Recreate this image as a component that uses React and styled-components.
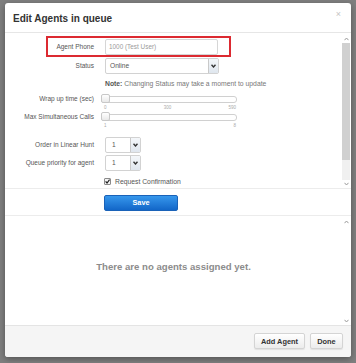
import React from 'react';
import styled, { createGlobalStyle } from 'styled-components';

const GlobalStyle = createGlobalStyle`
  html, body {
    margin: 0;
    padding: 0;
    background: #7f7f7f;
    font-family: "Liberation Sans", Arial, sans-serif;
  }
  #root {
    width: 356px;
    height: 363px;
    overflow: hidden;
  }
`;

const Page = styled.div`
  width: 356px;
  height: 363px;
  padding: 3px 0 0 5px;
  box-sizing: border-box;
  background: #7f7f7f;
`;

const Modal = styled.div`
  width: 346px;
  height: 354px;
  background: #ffffff;
  border-radius: 3px;
  box-shadow: 0 2px 6px rgba(0, 0, 0, 0.35);
  display: flex;
  flex-direction: column;
  overflow: hidden;
`;

const Header = styled.div`
  height: 29px;
  flex: none;
  display: flex;
  align-items: center;
  justify-content: space-between;
  padding: 0 8px;
  border-bottom: 1px solid #e6e6e6;
`;

const Title = styled.h3`
  margin: 1px 0 0;
  font-size: 10px;
  font-weight: bold;
  color: #333;
`;

const Close = styled.span`
  font-size: 9px;
  color: #c4c4c4;
  margin-top: -8px;
  margin-right: 2px;
`;

const FormPane = styled.div`
  height: 155px;
  flex: none;
  display: flex;
  border-bottom: 1px solid #ececec;
`;

const FormContent = styled.div`
  position: relative;
  flex: 1;
  padding-top: 5px;
  display: flex;
  flex-direction: column;
  overflow: hidden;
`;

const Highlight = styled.div`
  position: absolute;
  left: 41px;
  top: 3px;
  width: 185px;
  height: 21px;
  box-sizing: border-box;
  border: 2px solid #dc2a31;
`;

const Row = styled.div`
  display: flex;
  align-items: ${(p) => (p.$top ? 'flex-start' : 'center')};
  height: ${(p) => p.$h}px;
  margin-top: ${(p) => p.$mt || 0}px;
  flex: none;
`;

const Label = styled.div`
  width: 89px;
  text-align: right;
  font-size: 6.5px;
  line-height: 10px;
  color: #555;
  margin-right: 11px;
  white-space: nowrap;
`;

const TextInput = styled.div`
  width: 113px;
  height: 16px;
  box-sizing: border-box;
  border: 1px solid #d6d6d6;
  border-radius: 2px;
  padding-left: 3px;
  display: flex;
  align-items: center;
  font-size: 6.4px;
  color: #9a9a9a;
`;

const Select = styled.div`
  width: ${(p) => p.$w}px;
  height: 16px;
  box-sizing: border-box;
  border: 1px solid #d2d2d2;
  border-radius: 2px;
  display: flex;
  align-items: center;
  font-size: 6.6px;
  color: #555;
  overflow: hidden;
`;

const SelectValue = styled.span`
  flex: 1;
  padding-left: ${(p) => p.$pl || 4}px;
`;

const SelectArrow = styled.span`
  width: 9px;
  height: 100%;
  display: flex;
  align-items: center;
  justify-content: center;
  border-left: 1px solid #c9c9c9;
  background: linear-gradient(#f4f7fa, #dfe6ee);
`;

const Note = styled.div`
  font-size: 6.8px;
  color: #777;
  margin-left: 100px;
  b {
    color: #555;
  }
`;

const SliderBox = styled.div`
  width: 136px;
  display: flex;
  flex-direction: column;
  margin-left: -4px;
`;

const Track = styled.div`
  position: relative;
  height: 10px;
  display: flex;
  align-items: center;
`;

const TrackBar = styled.div`
  flex: 1;
  height: 5px;
  border: 1px solid #d0d0d0;
  border-radius: 3px;
  background: #fff;
`;

const Handle = styled.div`
  position: absolute;
  left: 0;
  top: 0;
  width: 9px;
  height: 9px;
  box-sizing: border-box;
  border: 1px solid #c8c8c8;
  border-radius: 2px;
  background: linear-gradient(#ffffff, #e9e9e9);
`;

const Ticks = styled.div`
  display: flex;
  justify-content: space-between;
  font-size: 4.5px;
  line-height: 7px;
  color: #aaa;
  padding: 0 1px 0 3px;
`;

const CheckRow = styled.label`
  display: flex;
  align-items: center;
  margin-left: 99px;
  font-size: 6.8px;
  color: #555;
  gap: 4px;
`;

const CheckBox = styled.span`
  width: 7px;
  height: 7px;
  box-sizing: border-box;
  border: 1px solid #8a8a8a;
  border-radius: 1px;
  display: flex;
  align-items: center;
  justify-content: center;
  background: #f4f4f4;
`;

const ScrollBar = styled.div`
  width: 8px;
  margin: 2px 1px 0 0;
  display: flex;
  flex-direction: column;
  background: ${(p) => (p.$track ? '#f0f0f0' : 'transparent')};
`;

const ScrollArrow = styled.div`
  height: 8px;
  flex: none;
  display: flex;
  align-items: center;
  justify-content: center;
  background: #fff;
`;

const ScrollThumb = styled.div`
  height: 117px;
  flex: none;
  background: #d0d0d0;
`;

const ScrollSpace = styled.div`
  flex: 1;
`;

const SavePane = styled.div`
  height: 26px;
  flex: none;
  display: flex;
  align-items: center;
  padding-left: 99px;
  border-bottom: 1px solid #ececec;
`;

const SaveButton = styled.button`
  width: 74px;
  height: 16px;
  border: 1px solid #1a62b8;
  border-radius: 2px;
  background: linear-gradient(#3797ec, #1266c8);
  color: #fff;
  font-family: inherit;
  font-weight: bold;
  font-size: 7.3px;
  padding: 0;
  margin-top: 1px;
`;

const ListPane = styled.div`
  height: 109px;
  flex: none;
  display: flex;
`;

const Empty = styled.div`
  flex: 1;
  display: flex;
  align-items: center;
  justify-content: center;
  padding-bottom: 8px;
  font-size: 9.6px;
  font-weight: bold;
  color: #8c8c8c;
`;

const Footer = styled.div`
  flex: 1;
  background: #f5f5f5;
  border-top: 1px solid #e4e4e4;
  display: flex;
  justify-content: flex-end;
  align-items: flex-start;
  gap: 5px;
  padding: 7px 8px 0 0;
`;

const FooterButton = styled.button`
  width: ${(p) => p.$w}px;
  height: 16px;
  padding: 0;
  border: 1px solid #d4d4d4;
  border-radius: 2px;
  background: linear-gradient(#ffffff, #ececec);
  box-shadow: 0 1px 1px rgba(0, 0, 0, 0.08);
  font-family: inherit;
  font-weight: bold;
  font-size: 7.4px;
  color: #333;
`;

const Chevron = ({ up, color = '#9a9a9a', w = 5, sw = 1 }) => (
  <svg width={w} height="4" viewBox="0 0 5 4">
    <polyline
      points={up ? '0.5,3.2 2.5,1 4.5,3.2' : '0.5,0.8 2.5,3 4.5,0.8'}
      fill="none"
      stroke={color}
      strokeWidth={sw}
    />
  </svg>
);

const Dropdown = ({ width, value }) => (
  <Select $w={width}>
    <SelectValue $pl={width < 50 ? 6 : 4}>{value}</SelectValue>
    <SelectArrow>
      <Chevron color="#333" sw={1.4} />
    </SelectArrow>
  </Select>
);

const Slider = ({ ticks }) => (
  <SliderBox>
    <Track>
      <TrackBar />
      <Handle />
    </Track>
    <Ticks>
      {ticks.map((t) => (
        <span key={t}>{t}</span>
      ))}
    </Ticks>
  </SliderBox>
);

const Scroll = ({ thumb }) => (
  <ScrollBar $track={thumb}>
    <ScrollArrow>
      <Chevron up />
    </ScrollArrow>
    {thumb && <ScrollThumb />}
    <ScrollSpace />
    <ScrollArrow>
      <Chevron />
    </ScrollArrow>
  </ScrollBar>
);

export default function App() {
  return (
    <Page>
      <GlobalStyle />
      <Modal>
        <Header>
          <Title>Edit Agents in queue</Title>
          <Close>×</Close>
        </Header>

        <FormPane>
          <FormContent>
            <Row $h={17}>
              <Label>Agent Phone</Label>
              <TextInput>1000 (Test User)</TextInput>
            </Row>
            <Row $h={17} $mt={2}>
              <Label>Status</Label>
              <Dropdown width={114} value="Online" />
            </Row>
            <Row $h={18}>
              <Note>
                <b>Note:</b> Changing Status may take a moment to update
              </Note>
            </Row>
            <Row $h={16} $mt={2} $top>
              <Label>Wrap up time (sec)</Label>
              <Slider ticks={['0', '300', '590']} />
            </Row>
            <Row $h={16} $mt={2} $top>
              <Label>Max Simultaneous Calls</Label>
              <Slider ticks={['1', '8']} />
            </Row>
            <Row $h={17} $mt={8}>
              <Label>Order in Linear Hunt</Label>
              <Dropdown width={36} value="1" />
            </Row>
            <Row $h={17} $mt={1}>
              <Label>Queue priority for agent</Label>
              <Dropdown width={36} value="1" />
            </Row>
            <Row $h={16} $mt={2}>
              <CheckRow>
                <CheckBox>
                  <svg width="5" height="5" viewBox="0 0 5 5">
                    <polyline points="0.6,2.4 2,4 4.6,0.6" fill="none" stroke="#222" strokeWidth="1.2" />
                  </svg>
                </CheckBox>
                Request Confirmation
              </CheckRow>
            </Row>
            <Highlight />
          </FormContent>
          <Scroll thumb />
        </FormPane>

        <SavePane>
          <SaveButton>Save</SaveButton>
        </SavePane>

        <ListPane>
          <Empty>There are no agents assigned yet.</Empty>
          <Scroll />
        </ListPane>

        <Footer>
          <FooterButton $w={51}>Add Agent</FooterButton>
          <FooterButton $w={33}>Done</FooterButton>
        </Footer>
      </Modal>
    </Page>
  );
}
